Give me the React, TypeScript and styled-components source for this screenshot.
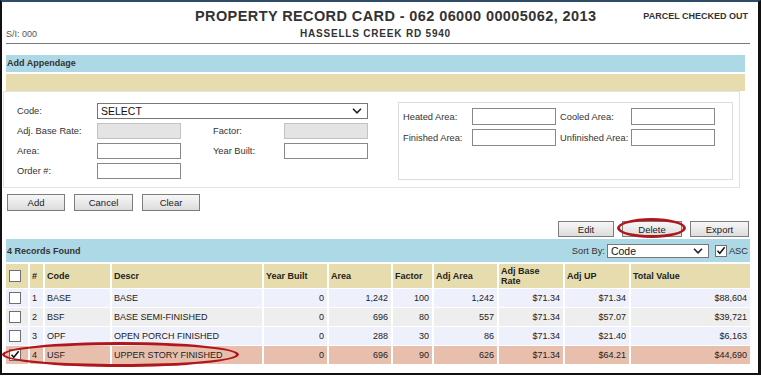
import React from "react";
import styled, { createGlobalStyle } from "styled-components";

const GlobalStyle = createGlobalStyle`
  html, body {
    margin: 0;
    padding: 0;
    background: #fff;
  }
  body {
    font-family: "Liberation Sans", Arial, sans-serif;
    color: #222;
  }
`;

type Tone = "lavender" | "gray" | "selected";

const rows: {
  n: number;
  code: string;
  descr: string;
  year: string;
  area: string;
  factor: string;
  adjArea: string;
  rate: string;
  adjUp: string;
  total: string;
  tone: Tone;
  checked?: boolean;
}[] = [
  { n: 1, code: "BASE", descr: "BASE", year: "0", area: "1,242", factor: "100", adjArea: "1,242", rate: "$71.34", adjUp: "$71.34", total: "$88,604", tone: "lavender" },
  { n: 2, code: "BSF", descr: "BASE SEMI-FINISHED", year: "0", area: "696", factor: "80", adjArea: "557", rate: "$71.34", adjUp: "$57.07", total: "$39,721", tone: "gray" },
  { n: 3, code: "OPF", descr: "OPEN PORCH FINISHED", year: "0", area: "288", factor: "30", adjArea: "86", rate: "$71.34", adjUp: "$21.40", total: "$6,163", tone: "lavender" },
  { n: 4, code: "USF", descr: "UPPER STORY FINISHED", year: "0", area: "696", factor: "90", adjArea: "626", rate: "$71.34", adjUp: "$64.21", total: "$44,690", tone: "selected", checked: true },
];

const colWidths = [22, 13, 65, 150, 63, 62, 39, 63, 64, 64, 119];

const toneColor: Record<Tone, string> = {
  lavender: "#eef0fb",
  gray: "#eeeeee",
  selected: "#e8bfad",
};

const Chevron = () => (
  <svg width="10" height="6" viewBox="0 0 10 6">
    <polyline points="1,0.8 5,4.8 9,0.8" fill="none" stroke="#222" strokeWidth="1.6" />
  </svg>
);

const CheckBox = ({ checked }: { checked?: boolean }) => (
  <Box>
    {checked && (
      <svg width="12" height="12" viewBox="0 0 12 12">
        <polyline points="1.8,5.6 4.6,8.8 10.4,1.6" fill="none" stroke="#111" strokeWidth="1.8" />
      </svg>
    )}
  </Box>
);

const App = () => {
  return (
    <>
      <GlobalStyle />
      <Frame>
        <Header>
          <span />
          <Title>PROPERTY RECORD CARD - 062 06000 00005062, 2013</Title>
          <Parcel>PARCEL CHECKED OUT</Parcel>
          <SerialNo>S/I: 000</SerialNo>
          <Subtitle>HASSELLS CREEK RD 5940</Subtitle>
          <span />
        </Header>

        <Band $tone="blue">Add Appendage</Band>
        <Band $tone="tan" />

        <FormBox>
          <FieldGrid>
            <Label>Code:</Label>
            <FakeSelect $width={271} $span>
              <span>SELECT</span>
              <Chevron />
            </FakeSelect>
            <Label>Adj. Base Rate:</Label>
            <Field disabled $off />
            <Label>Factor:</Label>
            <Field disabled $off />
            <Label>Area:</Label>
            <Field />
            <Label>Year Built:</Label>
            <Field />
            <Label>Order #:</Label>
            <Field />
          </FieldGrid>
          <SidePanel>
            <Label>Heated Area:</Label>
            <Field />
            <Label>Cooled Area:</Label>
            <Field />
            <Label>Finished Area:</Label>
            <Field />
            <Label>Unfinished Area:</Label>
            <Field />
          </SidePanel>
        </FormBox>

        <ButtonRow>
          <Button $width={58}>Add</Button>
          <Button $width={59}>Cancel</Button>
          <Button $width={58}>Clear</Button>
        </ButtonRow>

        <ActionRow>
          <Button $width={56} $short>Edit</Button>
          <Marked>
            <Button $width={60} $short>Delete</Button>
            <Ring $left={-5} $top={-3} $width={69} $height={20} />
          </Marked>
          <Button $width={59} $short>Export</Button>
        </ActionRow>

        <RecordsBar>
          <span>4 Records Found</span>
          <SortGroup>
            <SortLabel>Sort By:</SortLabel>
            <FakeSelect $width={102} $small>
              <span>Code</span>
              <Chevron />
            </FakeSelect>
            <SmallBox>
              <CheckBox checked />
            </SmallBox>
            <SortLabel>ASC</SortLabel>
          </SortGroup>
        </RecordsBar>

        <TableWrap>
          <Records>
            <colgroup>
              {colWidths.map((w, i) => (
                <col key={i} style={{ width: w }} />
              ))}
            </colgroup>
            <thead>
              <tr>
                <Th $check>
                  <CheckBox />
                </Th>
                <Th>#</Th>
                <Th>Code</Th>
                <Th>Descr</Th>
                <Th>Year Built</Th>
                <Th>Area</Th>
                <Th>Factor</Th>
                <Th>Adj Area</Th>
                <Th>Adj Base Rate</Th>
                <Th>Adj UP</Th>
                <Th>Total Value</Th>
              </tr>
            </thead>
            <tbody>
              {rows.map((r) => (
                <tr key={r.n}>
                  <Td $tone={r.tone} $check>
                    <CheckBox checked={r.checked} />
                  </Td>
                  <Td $tone={r.tone}>{r.n}</Td>
                  <Td $tone={r.tone}>{r.code}</Td>
                  <Td $tone={r.tone}>{r.descr}</Td>
                  <Td $tone={r.tone} $num>{r.year}</Td>
                  <Td $tone={r.tone} $num>{r.area}</Td>
                  <Td $tone={r.tone} $num>{r.factor}</Td>
                  <Td $tone={r.tone} $num>{r.adjArea}</Td>
                  <Td $tone={r.tone} $num>{r.rate}</Td>
                  <Td $tone={r.tone} $num>{r.adjUp}</Td>
                  <Td $tone={r.tone} $num>{r.total}</Td>
                </tr>
              ))}
            </tbody>
          </Records>
          <Ring $left={-2} $top={79} $width={237} $height={25} />
        </TableWrap>
      </Frame>
    </>
  );
};

const Frame = styled.div`
  box-sizing: border-box;
  width: 761px;
  height: 375px;
  border-top: 2px solid #2f4c68;
  border-left: 2px solid #111;
  border-right: 3px solid #111;
  border-bottom: 2px solid #111;
  padding: 0 8px 0 1px;
`;

const Header = styled.header`
  display: grid;
  grid-template-columns: 189px 1fr auto;
  grid-template-rows: 20px 14px;
  margin-left: 3px;
  padding: 5px 2px 2px 0;
  border-bottom: 1px solid #777;
  color: #333;
`;

const Title = styled.h1`
  margin: 0;
  font-size: 14.5px;
  line-height: 18px;
  letter-spacing: 0.4px;
  font-weight: bold;
  white-space: nowrap;
`;

const Parcel = styled.span`
  font-size: 9px;
  line-height: 18px;
  font-weight: bold;
  white-space: nowrap;
`;

const SerialNo = styled.span`
  font-size: 9px;
  line-height: 14px;
  color: #555;
`;

const Subtitle = styled.h2`
  margin: 0;
  padding-left: 105px;
  font-size: 10px;
  line-height: 14px;
  letter-spacing: 0.8px;
  font-weight: bold;
  white-space: nowrap;
`;

const Band = styled.div<{ $tone: "blue" | "tan" }>`
  height: 17px;
  line-height: 17px;
  margin: ${(p) => (p.$tone === "blue" ? "11px" : "2px")} 5px 0 3px;
  padding-left: 1px;
  background: ${(p) => (p.$tone === "blue" ? "#add8e6" : "#e6dcad")};
  font-size: 9px;
  font-weight: bold;
  color: #333;
`;

const FormBox = styled.div`
  box-sizing: border-box;
  height: 97px;
  margin-right: 10px;
  padding: 11px 0 0 13px;
  border: 1px solid #e2e2e2;
  display: flex;
  align-items: flex-start;
`;

const FieldGrid = styled.div`
  display: grid;
  grid-template-columns: 80px 116px 71px 84px;
  grid-auto-rows: 16px;
  row-gap: 4px;
  align-items: center;
`;

const SidePanel = styled.div`
  box-sizing: border-box;
  width: 335px;
  height: 78px;
  margin: -1px 0 0 30px;
  padding: 5px 0 0 4px;
  border: 1px solid #dcdcdc;
  display: grid;
  grid-template-columns: 69px 88px 71px 84px;
  grid-auto-rows: 17px;
  row-gap: 4px;
  align-content: start;
  align-items: center;
`;

const Label = styled.label`
  font-size: 9.3px;
  color: #333;
  white-space: nowrap;
`;

const Field = styled.input<{ $off?: boolean }>`
  box-sizing: border-box;
  width: 84px;
  height: 100%;
  margin: 0;
  padding: 0;
  border: 1px solid ${(p) => (p.$off ? "#c2c2c2" : "#888")};
  background: ${(p) => (p.$off ? "#e4e4e4" : "#fff")};
`;

const FakeSelect = styled.div<{ $width: number; $span?: boolean; $small?: boolean }>`
  box-sizing: border-box;
  width: ${(p) => p.$width}px;
  height: ${(p) => (p.$small ? "14px" : "16px")};
  ${(p) => (p.$span ? "grid-column: 2 / 5;" : "")}
  display: flex;
  align-items: center;
  justify-content: space-between;
  padding: 0 5px 0 3px;
  border: 1px solid #777;
  background: #fff;
  font-size: 10.5px;
  font-weight: normal;
  color: #111;
`;

const ButtonRow = styled.div`
  display: flex;
  gap: 9px;
  margin: 6px 0 0 4px;
`;

const ActionRow = styled.div`
  display: flex;
  justify-content: flex-end;
  gap: 8px;
  margin: 10px 1px 0 0;
`;

const Button = styled.button<{ $width: number; $short?: boolean }>`
  box-sizing: border-box;
  width: ${(p) => p.$width}px;
  height: ${(p) => (p.$short ? "16px" : "17px")};
  margin: 0;
  padding: 0;
  border: 1px solid #7d7d7d;
  border-radius: 0;
  background: linear-gradient(#f7f7f7, #dcdcdc);
  font-family: "Liberation Sans", Arial, sans-serif;
  font-size: 9.5px;
  color: #222;
`;

const Marked = styled.span`
  position: relative;
  display: inline-flex;
`;

const Ring = styled.span<{ $left: number; $top: number; $width: number; $height: number }>`
  position: absolute;
  left: ${(p) => p.$left}px;
  top: ${(p) => p.$top}px;
  width: ${(p) => p.$width}px;
  height: ${(p) => p.$height}px;
  box-sizing: border-box;
  border: 3px solid #b0171d;
  border-radius: 50%;
  pointer-events: none;
`;

const RecordsBar = styled.div`
  height: 23px;
  margin: 2px 0 0 3px;
  padding-left: 1px;
  display: flex;
  align-items: center;
  justify-content: space-between;
  background: #add8e6;
  font-size: 9px;
  font-weight: bold;
  color: #333;
`;

const SortGroup = styled.div`
  display: flex;
  align-items: center;
`;

const SortLabel = styled.span`
  font-size: 9.3px;
  font-weight: normal;
  color: #333;
  margin-right: 2px;
`;

const SmallBox = styled.span`
  display: inline-flex;
  margin: 0 2px 0 6px;
`;

const Box = styled.span`
  box-sizing: border-box;
  width: 12px;
  height: 12px;
  display: inline-flex;
  align-items: center;
  justify-content: center;
  vertical-align: middle;
  border: 1px solid #6f6f6f;
  background: #fff;
`;

const TableWrap = styled.div`
  position: relative;
  margin: 1px 0 0 1px;
`;

const Records = styled.table`
  table-layout: fixed;
  width: 748px;
  border-collapse: separate;
  border-spacing: 2px 1px;
`;

const Th = styled.th<{ $check?: boolean }>`
  height: 24px;
  padding: 0 2px 0 ${(p) => (p.$check ? "3px" : "2px")};
  background: #e6dcad;
  text-align: left;
  vertical-align: middle;
  font-size: 9px;
  line-height: 10px;
  font-weight: bold;
  color: #222;
  overflow: hidden;
`;

const Td = styled.td<{ $tone: Tone; $num?: boolean; $check?: boolean }>`
  height: 18px;
  padding: 0 3px 0 ${(p) => (p.$check ? "3px" : "2px")};
  background: ${(p) => toneColor[p.$tone]};
  text-align: ${(p) => (p.$num ? "right" : "left")};
  vertical-align: middle;
  font-size: 9px;
  line-height: 10px;
  color: #222;
  white-space: nowrap;
  overflow: hidden;
`;

export default App;
